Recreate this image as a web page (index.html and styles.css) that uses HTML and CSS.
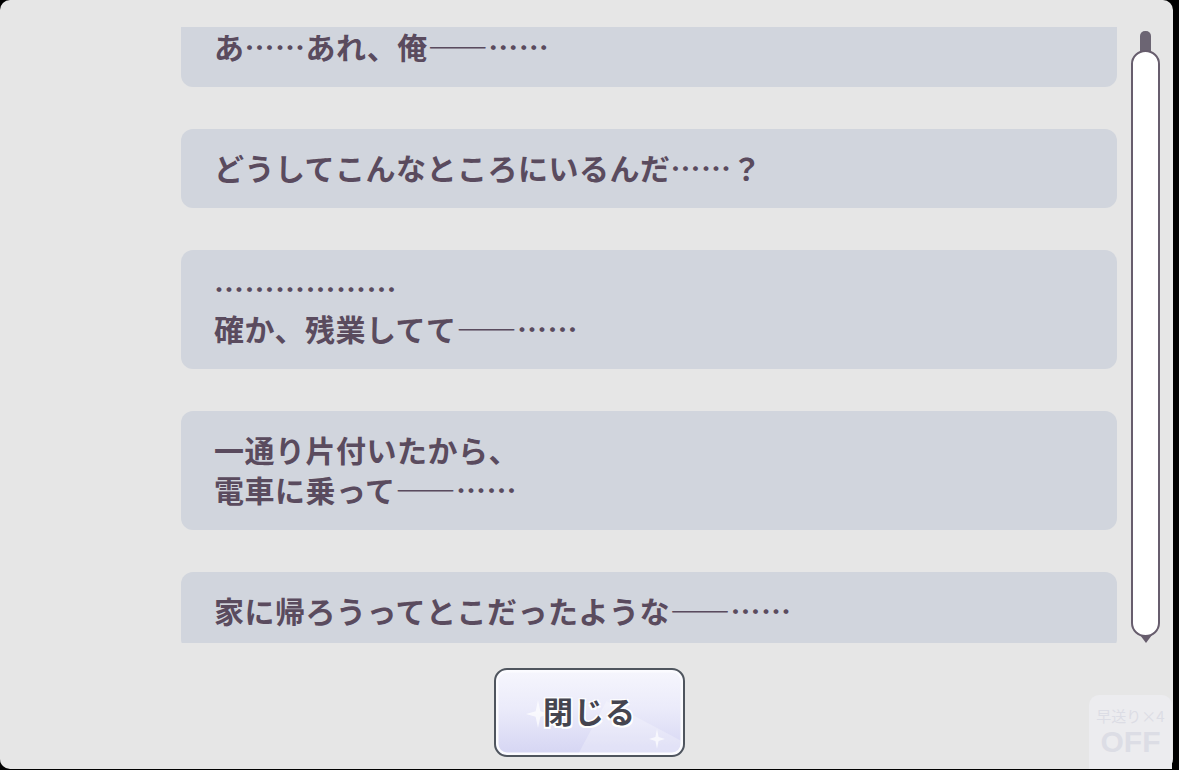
FILE: index.html
```html
<!DOCTYPE html>
<html lang="ja">
<head>
    <meta charset="UTF-8">
    <meta name="viewport" content="width=device-width, initial-scale=1.0">
    <title>ログ</title>
    <link rel="stylesheet" href="styles.css">
</head>
<body>
    <div class="panel">
        <div class="log">
            <ul class="lines">
                <li>あ……あれ、俺——……</li>
                <li>どうしてこんなところにいるんだ……？</li>
                <li>………………<br>確か、残業してて——……</li>
                <li>一通り片付いたから、<br>電車に乗って——……</li>
                <li>家に帰ろうってとこだったような——……</li>
            </ul>
            <div class="scrollbar">
                <span class="knob"></span>
                <span class="track"></span>
                <span class="tip"></span>
            </div>
        </div>

        <div class="actions">
            <button class="close-btn">
                <span class="spark s1"></span>
                <span class="spark s2"></span>
                <span class="label">閉じる</span>
            </button>
        </div>

        <div class="speed">
            <span class="speed-title">早送り×4</span>
            <span class="speed-state">OFF</span>
        </div>
    </div>
</body>
</html>
```

FILE: styles.css
```css
/* base */
body {
    margin: 0;
    padding: 0;
    background: #000;
    font-family: "Noto Sans CJK JP", "Noto Sans", sans-serif;
    overflow: hidden;
}

.panel {
    position: relative;
    width: 1173px;
    height: 769px;
    background: #e6e6e6;
    border-radius: 10px;
    display: flex;
    flex-direction: column;
}

/* log list */
.log {
    margin-top: 27px;
    height: 616px;
    display: flex;
    overflow: hidden;
}

.lines {
    list-style: none;
    margin: -19px 0 0 181px;
    padding: 0;
    width: 936px;
    display: flex;
    flex-direction: column;
    gap: 42px;
}

.lines li {
    flex: none;
    background: #d1d5dd;
    border-radius: 12px;
    padding: 17.5px 33px 21.5px;
    font-size: 30px;
    line-height: 40px;
    font-weight: bold;
    letter-spacing: 0.5px;
    color: #5a4b5e;
}

/* scrollbar */
.scrollbar {
    margin: 4px 0 0 14px;
    width: 29px;
    height: 612px;
    display: flex;
    flex-direction: column;
    align-items: center;
}

.knob {
    width: 11px;
    height: 22px;
    margin-bottom: -3px;
    background: #6c6573;
    border-radius: 5px 5px 0 0;
}

.track {
    flex: 1;
    width: 25px;
    background: #fff;
    border: 2px solid #675d6d;
    border-radius: 50% / 14px;
}

.tip {
    width: 0;
    height: 0;
    margin-top: -2px;
    border-left: 6px solid transparent;
    border-right: 6px solid transparent;
    border-top: 8px solid #675d6d;
}

/* close button */
.actions {
    display: flex;
    justify-content: center;
    padding: 25px 0 0 6px;
}

.close-btn {
    position: relative;
    width: 191px;
    height: 89px;
    padding: 0 0 5px;
    border: 2.5px solid #4f555e;
    border-radius: 13px;
    background: linear-gradient(180deg, #f6f6fd 0%, #ebebfa 45%, #d5d5f3 100%);
    box-shadow: inset 0 0 0 2.5px #fbfbff;
    overflow: hidden;
    cursor: pointer;
    font-family: inherit;
}

.close-btn::after {
    content: "";
    position: absolute;
    right: -20px;
    bottom: -40px;
    width: 120px;
    height: 70px;
    background: rgba(255, 255, 255, 0.25);
    transform: rotate(28deg);
}

.close-btn .label {
    position: relative;
    z-index: 1;
    font-size: 30px;
    font-weight: bold;
    color: #45454f;
    letter-spacing: 1px;
    text-shadow: 0 0 2px #fff, 1.5px 1.5px 0 #fff, -1.5px -1.5px 0 #fff, 1.5px -1.5px 0 #fff, -1.5px 1.5px 0 #fff;
}

.spark {
    position: absolute;
    background: rgba(255, 255, 255, 0.7);
    clip-path: polygon(50% 0, 60% 40%, 100% 50%, 60% 60%, 50% 100%, 40% 60%, 0 50%, 40% 40%);
}

.spark.s1 { left: 30px; top: 30px; width: 24px; height: 28px; }
.spark.s2 { right: 18px; bottom: 6px; width: 16px; height: 20px; }

/* speed badge */
.speed {
    position: absolute;
    left: 1089px;
    top: 695px;
    width: 83px;
    height: 75px;
    background: #ececef;
    border-radius: 10px 10px 0 0;
    display: flex;
    flex-direction: column;
    align-items: center;
    color: #dcdde5;
    font-weight: bold;
}

.speed-title {
    margin-top: 11px;
    font-size: 15px;
    line-height: 20px;
    font-weight: normal;
}

.speed-state {
    font-family: "Liberation Sans", sans-serif;
    font-size: 30px;
    line-height: 32px;
}
```
